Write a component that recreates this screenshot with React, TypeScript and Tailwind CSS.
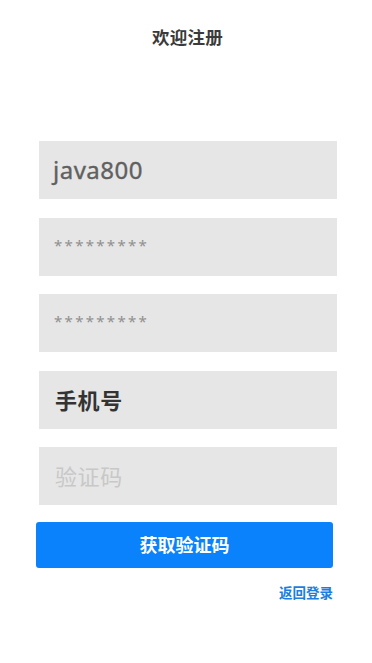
import React from "react";

const font = { fontFamily: '"Noto Sans", "Noto Sans CJK SC", sans-serif' };

export default function App() {
  return (
    <div className="w-[372px] h-[663px] bg-white flex flex-col" style={font}>
      <div className="pt-[25px] h-[25px] box-content flex justify-center">
        <span className="text-[17.5px] leading-[25px] font-bold text-[#3a3a3a] tracking-[0.2px] ml-[3px]">欢迎注册</span>
      </div>
      <div className="mt-[91px] ml-[39px] w-[298px] flex flex-col gap-[18.6px]">
        <div className="h-[58px] bg-[#e6e6e6] flex items-center pl-[14px]">
          <span className="text-[24px] leading-none text-[#606060] tracking-[0.5px] [-webkit-text-stroke:0.35px_#606060]">java800</span>
        </div>
        <div className="h-[58px] bg-[#e6e6e6] flex items-center pl-[15px]">
          <span className="text-[15px] leading-none text-[#909090] tracking-[2.3px] -mt-[3px]">*********</span>
        </div>
        <div className="h-[58px] bg-[#e6e6e6] flex items-center pl-[15px]">
          <span className="text-[15px] leading-none text-[#909090] tracking-[2.3px] -mt-[3px]">*********</span>
        </div>
        <div className="h-[58px] bg-[#e6e6e6] flex items-center pl-[16px]">
          <span className="text-[22px] leading-none font-bold text-[#333] tracking-[0.6px]">手机号</span>
        </div>
        <div className="h-[58px] bg-[#e6e6e6] flex items-center pl-[16px]">
          <span className="text-[22px] leading-none text-[#c8c8c8] tracking-[0.6px]">验证码</span>
        </div>
      </div>
      <div className="mt-[17px] ml-[36px] w-[297px] h-[46px] rounded-[3px] bg-[#0a82fb] flex items-center justify-center">
        <span className="text-[18px] leading-none font-bold text-white">获取验证码</span>
      </div>
      <div className="mt-[15px] ml-[36px] w-[297px] flex justify-end">
        <span className="text-[13.5px] leading-[20px] font-bold text-[#1a7fe0]">返回登录</span>
      </div>
    </div>
  );
}
